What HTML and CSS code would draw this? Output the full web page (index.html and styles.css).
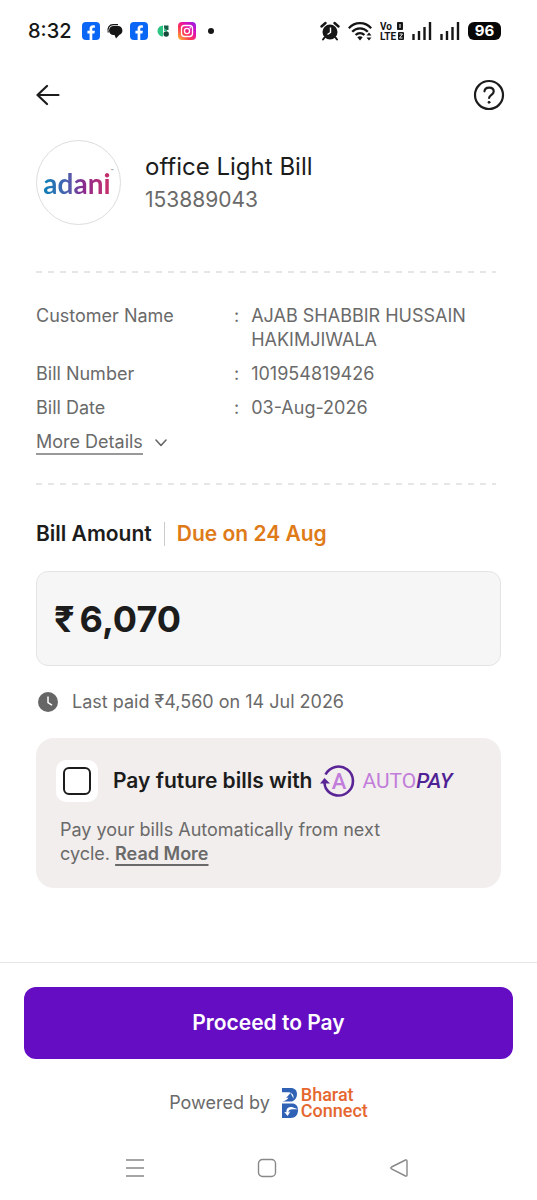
FILE: index.html
```html
<!DOCTYPE html>
<html lang="en">
<head>
<meta charset="utf-8">
<meta name="viewport" content="width=device-width, initial-scale=1">
<title>Bill payment</title>
<link rel="stylesheet" href="styles.css">
</head>
<body>
<svg class="sprite" width="0" height="0" aria-hidden="true">
  <symbol id="facebook" viewBox="0 0 18 18">
    <rect width="18" height="18" rx="4" fill="#0a66f5"/>
    <path d="M7.600 18v-6.600H5.400V8.700h2.200V6.800c0-2.400 1.300-3.600 3.500-3.600.8 0 1.400.1 1.800.2v2.400h-1.300c-1 0-1.300.5-1.300 1.300v1.600h2.600l-.5 2.700h-2.100V18z" fill="#fff"/>
  </symbol>
  <symbol id="signal" viewBox="0 0 20 20">
    <path d="M1.500 13v6M7 10v9M12.500 6v13M18 1v18" stroke="#161616" stroke-width="2.400" fill="none"/>
  </symbol>
</svg>
<div class="screen">
  <div class="status">
    <span class="clock">8:32</span>
    <div class="notices">
      <svg class="notice"><use href="#facebook"/></svg>
      <svg class="notice" viewBox="0 0 18 18"><path d="M7.500 4H12a4.500 4.500 0 0 1 1.500 8.700L10 16.500 8.500 13H7.500a4.500 4.500 0 0 1 0-9z" fill="#161616"/><path d="M2.300 10.500C1 6 3.500 2.700 7 2.700h5" stroke="#161616" stroke-width="1.200" fill="none"/></svg>
      <svg class="notice"><use href="#facebook"/></svg>
      <svg class="notice" viewBox="0 0 18 18"><path d="M9 3.500v11a5.500 5.500 0 0 1 0-11z" fill="#2cc483"/><path d="M10 3.500h4.500v4.500H13a3 3 0 0 1-3-3z" fill="#175c45"/><path d="M10 5.500a3 3 0 0 0 3 2.500v1h-3z" fill="#2cc483"/><circle cx="12.200" cy="12" r="2.700" fill="#16483a"/></svg>
      <svg class="notice" viewBox="0 0 18 18"><defs><linearGradient id="insta" x1="0" y1="1" x2="1" y2="0"><stop offset="0" stop-color="#ffc536"/><stop offset=".35" stop-color="#ff3b4e"/><stop offset=".65" stop-color="#e20fb0"/><stop offset="1" stop-color="#8a1cf0"/></linearGradient></defs><rect width="18" height="18" rx="4" fill="url(#insta)"/><rect x="3.500" y="3.500" width="11" height="11" rx="3" fill="none" stroke="#fff" stroke-width="1.300"/><circle cx="9" cy="9" r="2.600" fill="none" stroke="#fff" stroke-width="1.300"/><circle cx="12.200" cy="5.800" r=".8" fill="#fff"/></svg>
      <svg class="notice" viewBox="0 0 18 18"><circle cx="9" cy="9" r="3" fill="#161616"/></svg>
    </div>
    <div class="indicators">
      <svg width="20" height="20" viewBox="0 0 20 20"><circle cx="10" cy="11" r="7.500" fill="#161616"/><path d="M1.500 5.500 5.500 2M18.500 5.500 14.500 2" stroke="#161616" stroke-width="2.400" stroke-linecap="round"/><path d="M4.500 16.500 3 18.500M15.500 16.500 17 18.500" stroke="#161616" stroke-width="2" stroke-linecap="round"/><path d="M10.500 6.500v5l-3 2" stroke="#fff" stroke-width="1.400" fill="none"/></svg>
      <svg width="24" height="20" viewBox="0 0 24 20"><g fill="none" stroke="#161616" stroke-width="2.300"><path d="M.8 7.300C6.800.4 17.200.4 23.200 7.300"/><path d="M4.200 10.800c4.300-4.600 11.300-4.600 15.600 0"/><path d="M7.600 14c2.400-2.500 6.400-2.500 8.800 0"/></g><path d="M9.300 16.300q2.700-2 5.400 0L12 19.500z" fill="#161616"/><path d="m18.500 14.500 2.500-3 2.500 3zM18.500 16.500l2.500 3 2.500-3z" fill="#161616"/></svg>
      <svg width="24" height="20" viewBox="0 0 24 20" class="volte"><text x="0" y="9">Vo</text><text x="0" y="19">LTE</text><rect x="17" y="1" width="6" height="8" rx="1" fill="#161616"/><path d="M20 3v4" stroke="#fff"/><rect x="18" y="11" width="6" height="8" rx="1" fill="#161616"/><path d="M19.500 13h3l-3 4h3" stroke="#fff" fill="none" stroke-width=".9"/></svg>
      <svg width="20" height="20"><use href="#signal"/></svg>
      <svg width="20" height="20"><use href="#signal"/></svg>
      <span class="battery">96</span>
    </div>
  </div>

  <header class="topbar">
    <button class="icon-button" type="button" aria-label="Back"><svg width="24" height="24" viewBox="0 0 24 24" fill="none" stroke="#1c1c1c" stroke-width="2.200" stroke-linecap="round" stroke-linejoin="round"><path d="M22.500 12H1.500M11 3 1.500 12l9.500 9"/></svg></button>
    <button class="icon-button" type="button" aria-label="Help"><svg width="32" height="32" viewBox="0 0 32 32" fill="none" stroke="#1c1c1c" stroke-width="2.200" stroke-linecap="round"><circle cx="16" cy="16" r="14"/><path d="M11.500 12.300c.3-5 9.200-5 9.200.2 0 3.300-4.400 3.200-4.600 6.500"/><circle cx="16" cy="23.300" r="1" fill="#1c1c1c" stroke-width="1"/></svg></button>
  </header>

  <main class="content">
    <section class="biller">
      <div class="biller-logo"><span class="adani">adani</span><span class="tm">™</span></div>
      <div>
        <h1 class="biller-name">office Light Bill</h1>
        <p class="biller-id">153889043</p>
      </div>
    </section>

    <section class="details">
      <dl class="rows">
        <div class="row"><dt>Customer Name</dt><dd><span>:</span><span>AJAB SHABBIR HUSSAIN HAKIMJIWALA</span></dd></div>
        <div class="row"><dt>Bill Number</dt><dd><span>:</span><span>101954819426</span></dd></div>
        <div class="row"><dt>Bill Date</dt><dd><span>:</span><span>03-Aug-2026</span></dd></div>
      </dl>
      <button class="more" type="button"><span class="more-text">More Details</span><svg width="12" height="8" viewBox="0 0 12 8" fill="none" stroke="#666" stroke-width="1.600" stroke-linecap="round" stroke-linejoin="round"><path d="m1 1 5 5.500L11 1"/></svg></button>
    </section>

    <section>
      <div class="amount-head">
        <label class="amount-title" for="amount">Bill Amount</label>
        <span class="due">Due on 24 Aug</span>
      </div>
      <div class="amount-box"><span>₹</span><input class="amount-input" id="amount" type="text" value="6,070" readonly></div>
      <p class="last-paid"><svg width="20" height="20" viewBox="0 0 20 20"><circle cx="10" cy="10" r="10" fill="#666"/><path d="M10 4.500V10.500l4 2.700" fill="none" stroke="#fff" stroke-width="1.500"/></svg>Last paid ₹4,560 on 14 Jul 2026</p>
    </section>

    <section class="autopay">
      <div class="autopay-head">
        <span class="check-wrap"><input class="check" id="autopay" type="checkbox"></span>
        <label class="autopay-label" for="autopay">Pay future bills with</label>
        <span class="autopay-logo">
          <svg width="36" height="34" viewBox="0 0 36 34"><path d="M5.500 10.500A14.500 14.500 0 1 1 6 24.500Q4.800 22.500 4.500 19" fill="none" stroke="#5a2496" stroke-width="2.600"/><path d="m0 19.500 4.500-5.500 5.500 5.500z" fill="#5a2496"/><text class="logo-a" x="19" y="24.500" text-anchor="middle">A</text></svg>
          <span class="auto">AUTO<em class="pay">PAY</em></span>
        </span>
      </div>
      <p class="autopay-text">Pay your bills Automatically from next cycle. <a class="read-more" href="#">Read More</a></p>
    </section>
  </main>

  <footer class="footer">
    <button class="proceed" type="button">Proceed to Pay</button>
    <div class="powered">
      <span>Powered by</span>
      <span class="bharat">
        <svg width="16" height="32" viewBox="0 0 16 32"><path d="M0 1h8.500C13 1 15 3.500 15 7.200c0 3.200-1.600 6-5 7.300H0c3.500-.5 5.500-2 6.500-4L4 11l4.500-5 3 5.500C12 7 9 5.300 5.500 5.300H0z" fill="#2f62b5"/><path d="M0 16.500h11.500c3 .8 4.500 3.200 4.500 6.500 0 4.800-2.500 8-7.500 8H0z" fill="#2f62b5"/><path d="M16 22.200h-5.500c-2.500 0-4.300 1-4 3.300l2-1.500-2.800 5-3.500-4 2.300.3C4 21.500 6.500 19.700 10 20z" fill="#fff"/></svg>
        <span class="bharat-name"><span>Bharat</span><span>Connect</span></span>
      </span>
    </div>
  </footer>

  <nav class="system-nav">
    <button class="icon-button" type="button" aria-label="Recent apps"><svg width="20" height="20" viewBox="0 0 20 20" fill="none" stroke="#888" stroke-width="1.400"><path d="M1 2h18M1 10h18M1 18h18"/></svg></button>
    <button class="icon-button" type="button" aria-label="Home"><svg width="20" height="20" viewBox="0 0 20 20" fill="none" stroke="#888" stroke-width="1.400"><rect x="1.500" y="1.500" width="17" height="17" rx="4"/></svg></button>
    <button class="icon-button" type="button" aria-label="Back"><svg width="20" height="20" viewBox="0 0 20 20" fill="none" stroke="#888" stroke-width="1.400"><path d="M2.500 9 16.500 2q1.500-.5 1.500 1v14q0 1.500-1.500 1L2.500 11q-1.500-1 0-2z"/></svg></button>
  </nav>
</div>
</body>
</html>
```
FILE: styles.css
```css
* { box-sizing: border-box; }
body { margin: 0; background: #fff; color: #6a6a6a; font: 18px/24px Inter, "Liberation Sans", sans-serif; }
h1, p, dl, dd { margin: 0; }
button, input { font: inherit; color: inherit; }
svg { display: block; flex: none; }
.sprite { position: absolute; }
.screen { display: flex; flex-direction: column; min-height: 100vh; }

.status { display: flex; align-items: center; height: 62px; padding: 0 36px 0 28px; color: #161616; }
.clock { width: 54px; font-size: 20px; font-weight: 500; }
.notices { display: flex; gap: 6px; }
.notice { width: 18px; height: 18px; }
.indicators { display: flex; align-items: center; gap: 8px; margin-left: auto; }
.volte { font: 700 10px Roboto, sans-serif; fill: #161616; }
.battery { width: 33px; border-radius: 6px; background: #080808; color: #fff; font-size: 15px; font-weight: 700; line-height: 18px; text-align: center; }

.icon-button { padding: 0; border: 0; background: none; }
.topbar { display: flex; align-items: center; justify-content: space-between; height: 66px; padding: 0 32px 0 36px; }

.content { flex: 1; padding: 12px 36px 0; }
.biller { display: flex; align-items: center; gap: 24px; }
.biller-logo { display: flex; align-items: center; justify-content: center; width: 85px; height: 85px; border: 1px solid #ddd; border-radius: 50%; }
.adani { background: linear-gradient(90deg, #0b80b5, #4a62b0 35%, #8a2a8e 60%, #c4306c 95%); background-clip: text; color: transparent; font: 700 28px/34px Lato, sans-serif; }
.tm { align-self: flex-start; padding-top: 22px; font-size: 5px; line-height: 16px; }
.biller-name { color: #1c1c1c; font-size: 24px; font-weight: 400; line-height: 34px; }
.biller-id { font-size: 21px; line-height: 32px; }

.details { margin-top: 46px; padding: 33px 0 30px; background: repeating-linear-gradient(90deg, #e6e6e6 0 6px, transparent 6px 12px) 0 0 / 460px 2px no-repeat, repeating-linear-gradient(90deg, #e6e6e6 0 6px, transparent 6px 12px) 0 100% / 460px 2px no-repeat; }
.rows { display: grid; gap: 10px; }
.row { display: grid; grid-template-columns: 198fr 267fr; }
.row dd { display: flex; gap: 12px; }
.more { display: flex; align-items: center; gap: 12px; margin-top: 11px; padding: 0; border: 0; background: none; }
.more-text { border-bottom: 2px solid #999; line-height: 22px; }

.amount-head { display: flex; align-items: center; gap: 12px; margin-top: 37px; font-size: 21px; font-weight: 600; }
.amount-title { color: #1c1c1c; }
.due { padding-left: 12px; border-left: 1px solid #ccc; color: #de7a18; }
.amount-box { display: flex; align-items: center; gap: 5px; height: 95px; margin-top: 25px; padding: 0 17px; border: 1px solid #e4e4e4; border-radius: 12px; background: #f6f6f6; color: #1c1c1c; font-size: 36px; font-weight: 700; }
.amount-input { flex: 1; min-width: 0; padding: 0; border: 0; outline: 0; background: none; }
.last-paid { display: flex; align-items: center; gap: 14px; margin-top: 24px; padding-left: 2px; }

.autopay { margin-top: 24px; padding: 22px 20px; border-radius: 18px; background: #f2eeed; }
.autopay-head { display: flex; align-items: center; }
.check-wrap { padding: 7px; border-radius: 10px; background: #fff; }
.check { display: block; width: 28px; height: 28px; margin: 0; appearance: none; border: 2px solid #1c1c1c; border-radius: 6px; }
.autopay-label { margin-left: 15px; color: #1c1c1c; font-size: 21px; font-weight: 600; white-space: nowrap; }
.autopay-logo { display: flex; align-items: center; gap: 6px; margin-left: 8px; }
.logo-a { fill: #c27ddb; font: 500 22px Roboto, sans-serif; }
.auto { color: #c27ddb; font: 400 21px/24px Roboto, sans-serif; }
.pay { color: #4e2194; font-weight: 500; }
.autopay-text { max-width: 360px; margin-top: 16px; padding-left: 4px; }
.read-more { color: inherit; font-weight: 600; text-decoration: underline; text-decoration-thickness: 2px; text-underline-offset: 4px; }

.footer { padding: 24px 24px 16px; border-top: 1px solid #e6e6e6; }
.proceed { display: block; width: 100%; height: 72px; border: 0; border-radius: 12px; background: #650dc3; color: #fff; font-size: 21px; font-weight: 600; }
.powered { display: flex; align-items: center; justify-content: center; gap: 12px; margin-top: 28px; }
.bharat { display: flex; align-items: center; gap: 3px; }
.bharat-name { display: grid; color: #e5672f; font: 500 18px/16px Roboto, sans-serif; }

.system-nav { display: flex; align-items: center; justify-content: center; gap: 112px; height: 65px; padding-right: 4px; }
```
